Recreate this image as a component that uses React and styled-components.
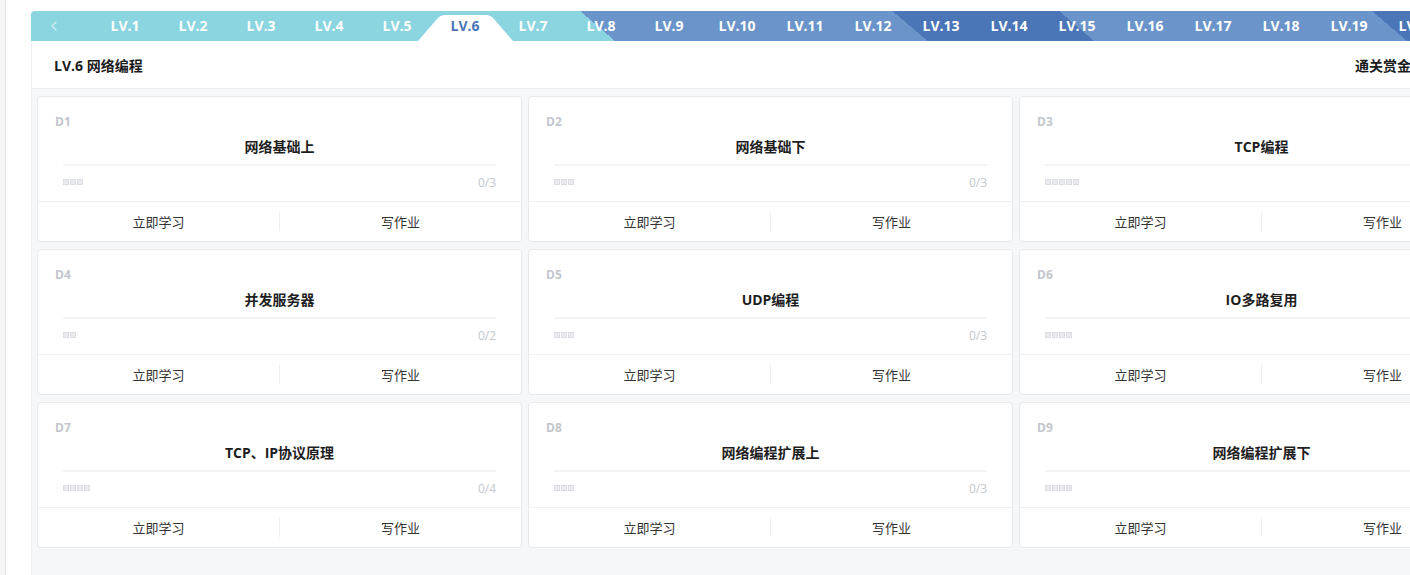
import React from "react";
import styled, { createGlobalStyle } from "styled-components";
import { ChevronLeft } from "lucide-react";

const GlobalStyle = createGlobalStyle`
  html, body {
    margin: 0;
    padding: 0;
    background: #fff;
    overflow: hidden;
  }
  body {
    font-family: "Open Sans", "Noto Sans CJK SC", sans-serif;
    color: #222;
  }
  * {
    box-sizing: border-box;
  }
`;

// colours of the level bar
const TEAL = "#8bd5e0";
const BLUE = "#6a94ca";
const DARK = "#4a75b7";

const BAR_W = 1479;
const BAR_H = 30;
const SLANT = 35;

// diagonal colour bands, x measured at mid height from the bar's left edge
const barBackground = (() => {
  const len = Math.hypot(BAR_H, SLANT);
  const s = BAR_H / len;
  const c = SLANT / len;
  const L = BAR_W * s + BAR_H * c;
  const pos = x => ((x - BAR_W / 2) * s + L / 2).toFixed(1);
  const deg = ((Math.atan2(BAR_H, SLANT) * 180) / Math.PI).toFixed(2);
  const [a, b, d, e] = [566.5, 879, 1045.5, 1358.5].map(pos);
  return `linear-gradient(${deg}deg, ${TEAL} 0 ${a}px, ${BLUE} ${a}px ${b}px, ${DARK} ${b}px ${d}px, ${BLUE} ${d}px ${e}px, ${DARK} ${e}px)`;
})();

const Page = styled.div`
  display: flex;
  height: 100vh;
`;

const LeftRail = styled.div`
  width: 6px;
  flex-shrink: 0;
  background: #f6f6f7;
  border-right: 1px solid #e6e6e8;
`;

const Gutter = styled.div`
  width: 25px;
  flex-shrink: 0;
`;

const Main = styled.div`
  width: ${BAR_W}px;
  flex-shrink: 0;
  padding-top: 11px;
  display: flex;
  flex-direction: column;
`;

const TabBar = styled.div`
  height: ${BAR_H}px;
  display: flex;
  border-radius: 4px 4px 0 0;
  background: ${barBackground};
`;

const ArrowBox = styled.div`
  width: 60px;
  flex-shrink: 0;
  display: flex;
  align-items: center;
  padding-left: 15px;
  color: rgba(255, 255, 255, 0.55);
`;

const Tab = styled.div`
  position: relative;
  width: 68px;
  flex-shrink: 0;
  text-align: center;
  line-height: 30px;
  font-size: 14px;
  font-weight: 700;
  color: ${p => (p.$active ? DARK : "#fff")};

  &::before {
    content: "";
    display: ${p => (p.$active ? "block" : "none")};
    position: absolute;
    left: -13px;
    top: 4px;
    width: 95px;
    height: 26px;
    background: #fff;
    clip-path: path("M0 26 L19 4 Q22.5 0 27 0 L68 0 Q72.5 0 76 4 L95 26 Z");
  }
`;

const TabLabel = styled.span`
  position: relative;
`;

const Panel = styled.div`
  flex: 1;
  display: flex;
  flex-direction: column;
  border-left: 1px solid #eceef1;
`;

const Header = styled.div`
  height: 48px;
  flex-shrink: 0;
  display: flex;
  align-items: center;
  padding: 0 23px 0 22px;
  border-bottom: 1px solid #eeeff2;
  background: #fff;
  font-size: 14px;
  font-weight: 700;
  color: #1a1a1a;
`;

const Reward = styled.div`
  margin-left: auto;
  width: 132px;
  white-space: nowrap;
`;

const Content = styled.div`
  flex: 1;
  background: #f6f7f9;
  padding: 7px 5px;
  display: grid;
  grid-template-columns: repeat(3, 485px);
  grid-auto-rows: 146px;
  align-content: start;
  column-gap: 6px;
  row-gap: 7px;
`;

const Card = styled.div`
  background: #fff;
  border: 1px solid #e8e9ec;
  border-radius: 4px;
  display: flex;
  flex-direction: column;
`;

const CardBody = styled.div`
  flex: 1;
  padding: 17px 25px 0 17px;
  display: flex;
  flex-direction: column;
`;

const DayLabel = styled.div`
  font-size: 12px;
  line-height: 16px;
  font-weight: 700;
  color: #c3c6cd;
`;

const Title = styled.div`
  margin-top: 7px;
  padding-left: 8px;
  text-align: center;
  font-size: 14px;
  line-height: 20px;
  font-weight: 700;
  color: #1e1e1e;
`;

const Rule = styled.div`
  margin: 7px 0 0 8px;
  height: 2px;
  background: #f3f4f6;
`;

const ProgressRow = styled.div`
  margin: 8px 0 0 8px;
  height: 16px;
  display: flex;
  align-items: center;
  justify-content: space-between;
`;

const Squares = styled.div`
  display: flex;
  gap: 1px;
`;

const Square = styled.span`
  width: 6px;
  height: 6px;
  background: #e9eaed;
  border: 1px solid #dcdee3;
`;

const Count = styled.span`
  font-size: 12px;
  color: #c3c7ce;
`;

const Footer = styled.div`
  height: 40px;
  flex-shrink: 0;
  border-top: 1px solid #f0f1f3;
  display: flex;
  align-items: center;
`;

const Action = styled.div`
  flex: 1;
  text-align: center;
  font-size: 13px;
  color: #333;
`;

const Divider = styled.div`
  width: 1px;
  height: 19px;
  background: #eeeff1;
`;

const lessons = [
  { day: "D1", title: "网络基础上", total: 3 },
  { day: "D2", title: "网络基础下", total: 3 },
  { day: "D3", title: "TCP编程", total: 5 },
  { day: "D4", title: "并发服务器", total: 2 },
  { day: "D5", title: "UDP编程", total: 3 },
  { day: "D6", title: "IO多路复用", total: 4 },
  { day: "D7", title: "TCP、IP协议原理", total: 4 },
  { day: "D8", title: "网络编程扩展上", total: 3 },
  { day: "D9", title: "网络编程扩展下", total: 4 }
];

const levels = Array.from({ length: 20 }, (_, i) => i + 1);

const LessonCard = ({ day, title, total }) => (
  <Card>
    <CardBody>
      <DayLabel>{day}</DayLabel>
      <Title>{title}</Title>
      <Rule />
      <ProgressRow>
        <Squares>
          {Array.from({ length: total }, (_, i) => (
            <Square key={i} />
          ))}
        </Squares>
        <Count>{`0/${total}`}</Count>
      </ProgressRow>
    </CardBody>
    <Footer>
      <Action>立即学习</Action>
      <Divider />
      <Action>写作业</Action>
    </Footer>
  </Card>
);

export default function App() {
  return (
    <>
      <GlobalStyle />
      <Page>
        <LeftRail />
        <Gutter />
        <Main>
          <TabBar>
            <ArrowBox>
              <ChevronLeft size={16} strokeWidth={2.2} />
            </ArrowBox>
            {levels.map(n => (
              <Tab key={n} $active={n === 6}>
                <TabLabel>{`LV.${n}`}</TabLabel>
              </Tab>
            ))}
          </TabBar>
          <Panel>
            <Header>
              <span>LV.6 网络编程</span>
              <Reward>通关赏金：500</Reward>
            </Header>
            <Content>
              {lessons.map(l => (
                <LessonCard key={l.day} {...l} />
              ))}
            </Content>
          </Panel>
        </Main>
      </Page>
    </>
  );
}
